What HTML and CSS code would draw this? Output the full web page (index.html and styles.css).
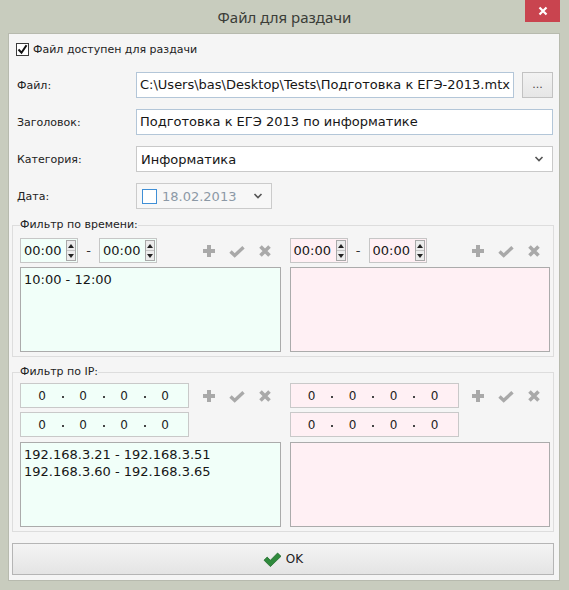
FILE: index.html
```html
<!DOCTYPE html>
<html lang="ru">
<head>
<meta charset="utf-8">
<title>Файл для раздачи</title>
<link rel="stylesheet" href="styles.css">
</head>
<body>
<div class="window">
  <div class="titlebar">
    <div></div>
    <div class="title">Файл для раздачи</div>
    <div class="tb-right">
      <div class="close"><svg width="10" height="10" viewBox="0 0 10 10"><path d="M1.5 1.5l7 7M8.5 1.5l-7 7" stroke="#fff" stroke-width="2.2" fill="none"/></svg></div>
    </div>
  </div>
  <div class="client">
    <div class="check-row">
      <span class="checkbox"><svg width="11" height="11" viewBox="0 0 11 11"><path d="M1.5 5.5l3 3.2 5-7.5" stroke="#111" stroke-width="2" fill="none"/></svg></span>
      <span class="label">Файл доступен для раздачи</span>
    </div>
    <div class="form">
      <span class="label">Файл:</span>
      <div class="file-row">
        <div class="edit">C:\Users\bas\Desktop\Tests\Подготовка к ЕГЭ-2013.mtx</div>
        <div class="browse">...</div>
      </div>
      <span class="label">Заголовок:</span>
      <div class="edit">Подготовка к ЕГЭ 2013 по информатике</div>
      <span class="label">Категория:</span>
      <div class="combo"><span class="combo-text">Информатика</span><svg class="chev" width="10" height="8" viewBox="0 0 10 8"><path d="M1.5 2l3.5 3.5L8.5 2" stroke="#555" stroke-width="1.6" fill="none"/></svg></div>
      <span class="label">Дата:</span>
      <div class="date"><span class="date-check"></span><span class="date-text">18.02.2013</span><svg class="chev" width="10" height="8" viewBox="0 0 10 8"><path d="M1.5 2l3.5 3.5L8.5 2" stroke="#555" stroke-width="1.6" fill="none"/></svg></div>
    </div>

    <fieldset class="group group-time">
      <legend>Фильтр по времени:</legend>
      <div class="cols">
        <div class="col allow">
          <div class="bar">
            <div class="spin"><span class="val">00:00</span><span class="arrows"><span class="up"></span><span class="down"></span></span></div>
            <span class="dash">-</span>
            <div class="spin"><span class="val">00:00</span><span class="arrows"><span class="up"></span><span class="down"></span></span></div>
            <div class="tools">
              <svg width="16" height="16" viewBox="0 0 16 16"><path d="M6 2h4v4h4v4h-4v4H6v-4H2V6h4z" fill="#a9a9a9"/></svg>
              <svg width="16" height="16" viewBox="0 0 16 16"><path d="M1.5 8.5l4.2 4 8.8-8.3" stroke="#a9a9a9" stroke-width="3.4" fill="none"/></svg>
              <svg width="16" height="16" viewBox="0 0 16 16"><path d="M3.5 3.5l9 9M12.5 3.5l-9 9" stroke="#a9a9a9" stroke-width="3.6" fill="none"/></svg>
            </div>
          </div>
          <div class="list"><div>10:00 - 12:00</div></div>
        </div>
        <div class="col deny">
          <div class="bar">
            <div class="spin"><span class="val">00:00</span><span class="arrows"><span class="up"></span><span class="down"></span></span></div>
            <span class="dash">-</span>
            <div class="spin"><span class="val">00:00</span><span class="arrows"><span class="up"></span><span class="down"></span></span></div>
            <div class="tools">
              <svg width="16" height="16" viewBox="0 0 16 16"><path d="M6 2h4v4h4v4h-4v4H6v-4H2V6h4z" fill="#a9a9a9"/></svg>
              <svg width="16" height="16" viewBox="0 0 16 16"><path d="M1.5 8.5l4.2 4 8.8-8.3" stroke="#a9a9a9" stroke-width="3.4" fill="none"/></svg>
              <svg width="16" height="16" viewBox="0 0 16 16"><path d="M3.5 3.5l9 9M12.5 3.5l-9 9" stroke="#a9a9a9" stroke-width="3.6" fill="none"/></svg>
            </div>
          </div>
          <div class="list"></div>
        </div>
      </div>
    </fieldset>

    <fieldset class="group group-ip">
      <legend>Фильтр по IP:</legend>
      <div class="cols">
        <div class="col allow">
          <div class="ip-grid">
            <div class="ip"><span class="oct">0</span><span class="dot"></span><span class="oct">0</span><span class="dot"></span><span class="oct">0</span><span class="dot"></span><span class="oct">0</span></div>
            <div class="tools">
              <svg width="16" height="16" viewBox="0 0 16 16"><path d="M6 2h4v4h4v4h-4v4H6v-4H2V6h4z" fill="#a9a9a9"/></svg>
              <svg width="16" height="16" viewBox="0 0 16 16"><path d="M1.5 8.5l4.2 4 8.8-8.3" stroke="#a9a9a9" stroke-width="3.4" fill="none"/></svg>
              <svg width="16" height="16" viewBox="0 0 16 16"><path d="M3.5 3.5l9 9M12.5 3.5l-9 9" stroke="#a9a9a9" stroke-width="3.6" fill="none"/></svg>
            </div>
            <div class="ip"><span class="oct">0</span><span class="dot"></span><span class="oct">0</span><span class="dot"></span><span class="oct">0</span><span class="dot"></span><span class="oct">0</span></div>
          </div>
          <div class="list"><div>192.168.3.21 - 192.168.3.51</div><div>192.168.3.60 - 192.168.3.65</div></div>
        </div>
        <div class="col deny">
          <div class="ip-grid">
            <div class="ip"><span class="oct">0</span><span class="dot"></span><span class="oct">0</span><span class="dot"></span><span class="oct">0</span><span class="dot"></span><span class="oct">0</span></div>
            <div class="tools">
              <svg width="16" height="16" viewBox="0 0 16 16"><path d="M6 2h4v4h4v4h-4v4H6v-4H2V6h4z" fill="#a9a9a9"/></svg>
              <svg width="16" height="16" viewBox="0 0 16 16"><path d="M1.5 8.5l4.2 4 8.8-8.3" stroke="#a9a9a9" stroke-width="3.4" fill="none"/></svg>
              <svg width="16" height="16" viewBox="0 0 16 16"><path d="M3.5 3.5l9 9M12.5 3.5l-9 9" stroke="#a9a9a9" stroke-width="3.6" fill="none"/></svg>
            </div>
            <div class="ip"><span class="oct">0</span><span class="dot"></span><span class="oct">0</span><span class="dot"></span><span class="oct">0</span><span class="dot"></span><span class="oct">0</span></div>
          </div>
          <div class="list"></div>
        </div>
      </div>
    </fieldset>

    <button class="ok"><svg width="19" height="15" viewBox="0 0 19 15"><path d="M1 8.2l3.2-3.1 3.2 3.2L14.6 1 18 4.3 7.4 14.6z" fill="#2f8a3c" stroke="#1f6a2b" stroke-width="0.8"/></svg><span>OK</span></button>
  </div>
</div>
</body>
</html>
```

FILE: styles.css
```css
* { box-sizing: border-box; }
html, body { margin: 0; padding: 0; }
body {
  font-family: "DejaVu Sans", Verdana, sans-serif;
  font-size: 11px;
  color: #1e1e1e;
  background: #c8ccbe;
}
.window {
  width: 569px;
  height: 590px;
  background: #c8ccbe;
  display: flex;
  flex-direction: column;
  overflow: hidden;
}
.titlebar {
  height: 33px;
  flex: none;
  display: grid;
  grid-template-columns: 1fr auto 1fr;
  align-items: start;
}
.title {
  font-family: "Noto Sans", "Open Sans", sans-serif;
  font-size: 15px;
  color: #3b3d38;
  line-height: 34px;
}
.tb-right { display: flex; justify-content: flex-end; padding-right: 9px; }
.close {
  width: 35px;
  height: 22px;
  background: #c9444f;
  display: flex;
  align-items: center;
  justify-content: center;
}
.client {
  flex: 1;
  margin: 0 9px 9px 8px;
  background: #f5f5f5;
  border: 1px solid #b7baae;
  padding: 7px 5px 5px 3px;
  display: flex;
  flex-direction: column;
}
.check-row {
  height: 17px;
  display: flex;
  align-items: center;
  gap: 4px;
  padding-left: 4px;
}
.checkbox {
  width: 13px;
  height: 13px;
  border: 1px solid #3a3a3a;
  background: #fff;
  display: flex;
  align-items: center;
  justify-content: center;
}
.label { font-size: 11px; color: #222; }
.form {
  margin: 14px 1px 9px 5px;
  display: grid;
  grid-template-columns: 119px 1fr;
  grid-auto-rows: 26px;
  row-gap: 11px;
  align-items: center;
}
.form > .label { align-self: center; }
.file-row { display: flex; gap: 8px; height: 26px; }
.edit {
  flex: 1;
  height: 26px;
  border: 1px solid #b3c6d8;
  background: #fff;
  font-size: 13px;
  line-height: 24px;
  padding: 0 3px;
  white-space: nowrap;
  overflow: hidden;
  color: #161616;
  min-width: 0;
}
.browse {
  width: 31px;
  flex: none;
  border: 1px solid #c2c2c2;
  background: linear-gradient(#f2f2f2, #e6e6e6);
  color: #444;
  font-size: 11px;
  display: flex;
  align-items: flex-end;
  justify-content: center;
  padding-bottom: 6px;
}
.combo {
  height: 26px;
  border: 1px solid #c9c9c9;
  background: #fff;
  display: flex;
  align-items: center;
  padding: 0 8px 0 4px;
  font-size: 13px;
  color: #161616;
}
.combo-text { flex: 1; }
.date {
  width: 136px;
  height: 26px;
  border: 1px solid #cbcbcb;
  background: #f7f7f7;
  display: flex;
  align-items: center;
  padding: 0 8px 0 5px;
  font-size: 13px;
}
.date-check {
  width: 15px;
  height: 15px;
  border: 1px solid #3f8fd6;
  background: #fff;
  margin-right: 5px;
  flex: none;
}
.date-text { flex: 1; color: #8c99a6; }
.chev { flex: none; }

.group {
  margin: 0;
  border: 1px solid #dddddd;
  padding: 6px 3px 4px 7px;
  min-width: 0;
}
.group legend {
  padding: 0;
  font-size: 11px;
  line-height: 14px;
  color: #222;
}
.group-ip { margin-top: 8px; padding-top: 4px; }
.cols {
  display: grid;
  grid-template-columns: 1fr 1fr;
  column-gap: 9px;
}
.col { display: flex; flex-direction: column; min-width: 0; }
.bar {
  height: 25px;
  display: flex;
  align-items: center;
  margin-bottom: 4px;
}
.spin {
  width: 58px;
  height: 25px;
  border: 1px solid #c6c6c6;
  display: flex;
  align-items: center;
  padding-left: 3px;
  font-size: 13px;
  color: #161616;
}
.allow .spin, .allow .ip, .allow .list { background: #f1fff9; }
.deny .spin, .deny .ip, .deny .list { background: #fff0f4; }
.spin .val { flex: 1; }
.arrows {
  width: 10px;
  height: 21px;
  margin-right: 1px;
  border: 1px solid #a9a9a9;
  background: #ececec;
  display: flex;
  flex-direction: column;
}
.arrows span {
  flex: 1;
  display: flex;
  align-items: center;
  justify-content: center;
}
.arrows .up { border-bottom: 1px solid #c4c4c4; }
.arrows .up::before {
  content: "";
  border-left: 3px solid transparent;
  border-right: 3px solid transparent;
  border-bottom: 4px solid #222;
}
.arrows .down::before {
  content: "";
  border-left: 3px solid transparent;
  border-right: 3px solid transparent;
  border-top: 4px solid #222;
}
.dash {
  width: 21px;
  text-align: center;
  font-size: 13px;
  color: #333;
}
.tools {
  margin-left: auto;
  margin-right: 8px;
  display: flex;
  gap: 12px;
  align-items: center;
}
.list {
  height: 85px;
  border: 1px solid #ababab;
  padding: 3px 3px;
  font-size: 13px;
  line-height: 17px;
  color: #161616;
}
.ip-grid {
  display: grid;
  grid-template-columns: 169px 1fr;
  grid-template-rows: 25px 25px;
  row-gap: 4px;
  margin-bottom: 5px;
  align-items: center;
}
.ip {
  height: 25px;
  border: 1px solid #c9c9c9;
  display: flex;
  align-items: center;
  padding-left: 11px;
  font-size: 12px;
  color: #222;
}
.oct { width: 20px; text-align: center; }
.dot {
  width: 21px;
  display: flex;
  justify-content: center;
}
.dot::before {
  content: "";
  width: 2px;
  height: 2px;
  background: #444;
  margin-top: 2px;
}
.ok {
  margin-top: 11px;
  height: 32px;
  border: 1px solid #b5b5b5;
  background: linear-gradient(#f4f4f4, #e4e4e4);
  display: flex;
  align-items: center;
  justify-content: center;
  gap: 4px;
  font-family: "DejaVu Sans", Verdana, sans-serif;
  font-size: 12px;
  color: #222;
  padding: 0;
}
```
